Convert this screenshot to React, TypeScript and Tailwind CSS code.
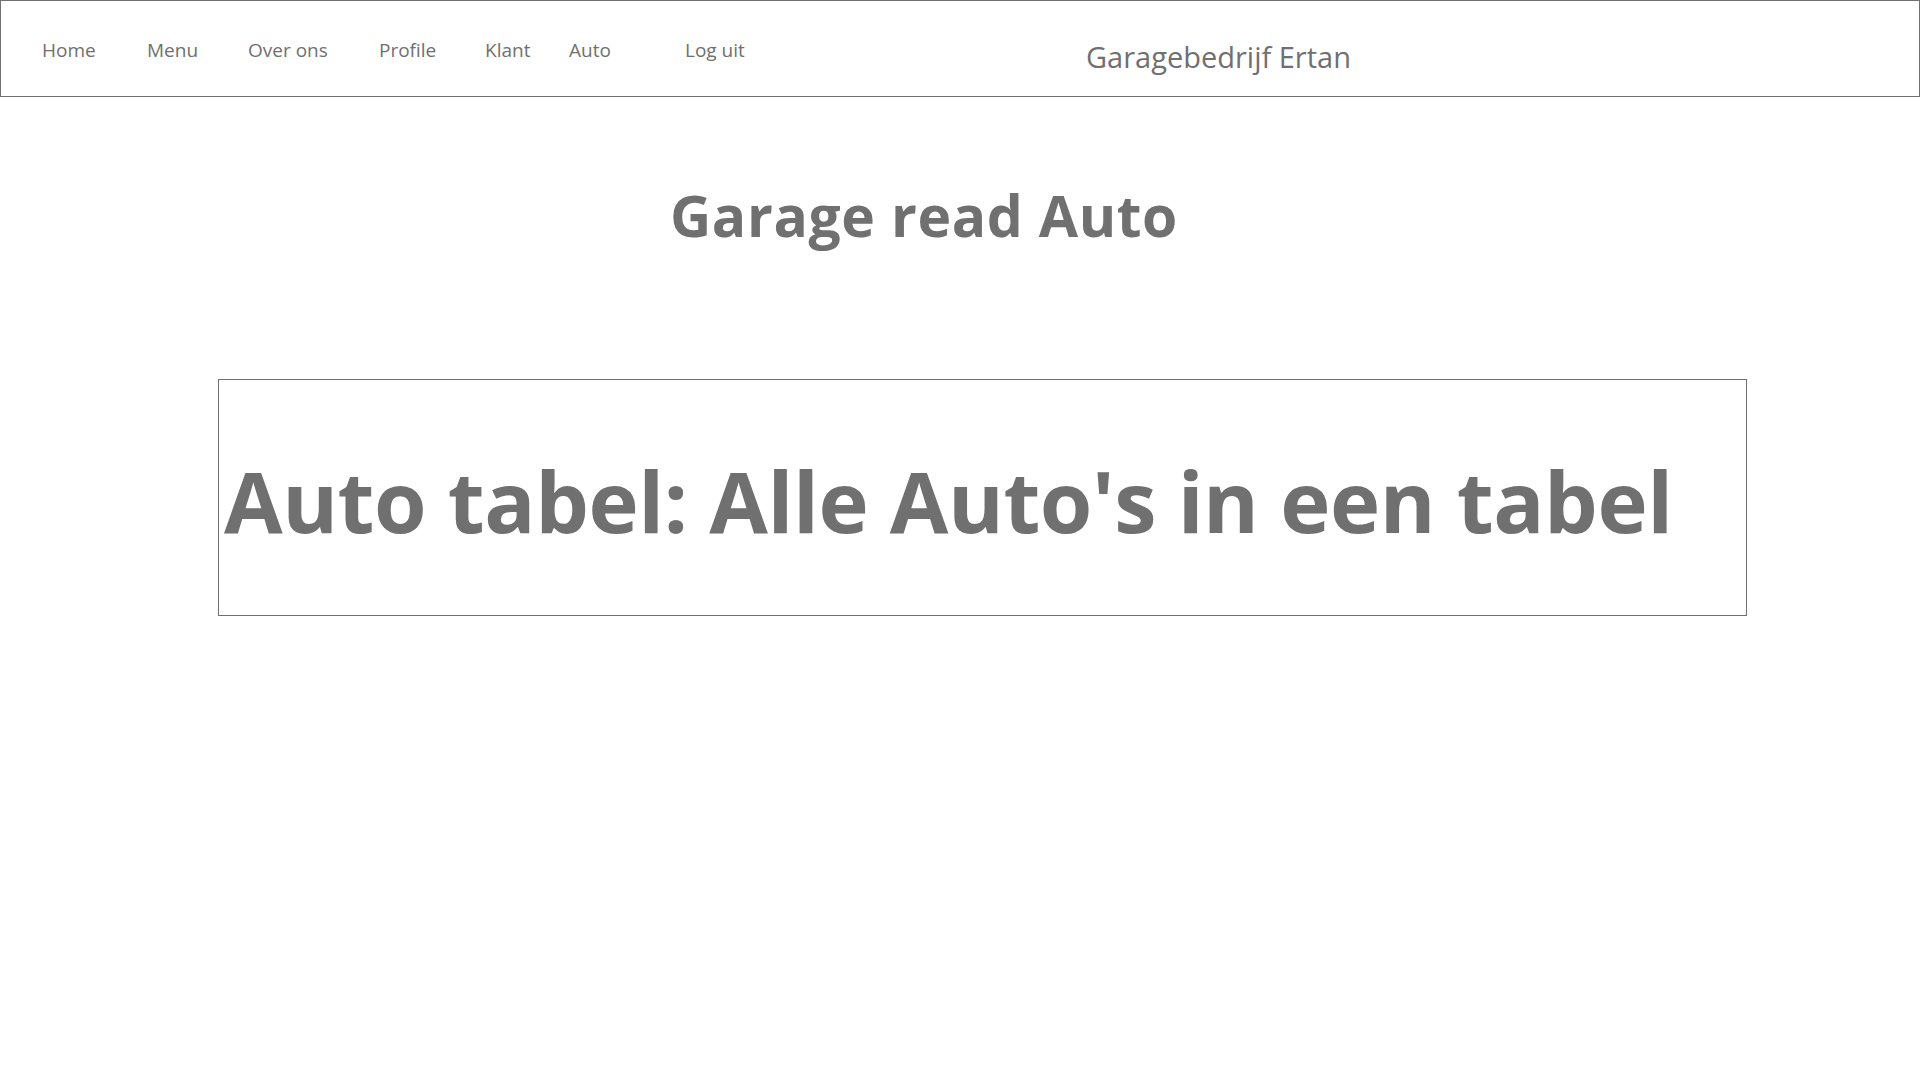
import React from "react";

const navItems: { label: string; w: string }[] = [
  { label: "Home", w: "w-[105px]" },
  { label: "Menu", w: "w-[101px]" },
  { label: "Over ons", w: "w-[131px]" },
  { label: "Profile", w: "w-[106px]" },
  { label: "Klant", w: "w-[84px]" },
  { label: "Auto", w: "w-[116px]" },
  { label: "Log uit", w: "w-[401px]" },
];

export default function App() {
  return (
    <div
      className="min-h-screen w-full bg-white text-[#707070]"
      style={{ fontFamily: '"Open Sans", "Noto Sans", sans-serif' }}
    >
      <header className="flex h-[97px] w-full border border-[#707070] box-border">
        <nav className="flex pl-[41px] pt-[40px]">
          {navItems.map((n) => (
            <a key={n.label} className={`${n.w} block text-[19px] leading-[19px] cursor-pointer`}>
              {n.label}
            </a>
          ))}
        </nav>
        <div className="pt-[41px] text-[29px] leading-[29px]">Garagebedrijf Ertan</div>
      </header>

      <h1 className="mt-[90px] flex justify-center pr-[72px] text-[57px] leading-[57px] font-bold tracking-[0.6px]">
        Garage read Auto
      </h1>

      <div className="ml-[218px] mt-[135px] h-[237px] w-[1529px] border border-[#707070] box-border pl-[5px] pt-[78px]">
        <h2 className="text-[85px] leading-[85px] font-bold whitespace-nowrap tracking-[-0.45px]">
          Auto tabel: Alle Auto's in een tabel
        </h2>
      </div>
    </div>
  );
}
